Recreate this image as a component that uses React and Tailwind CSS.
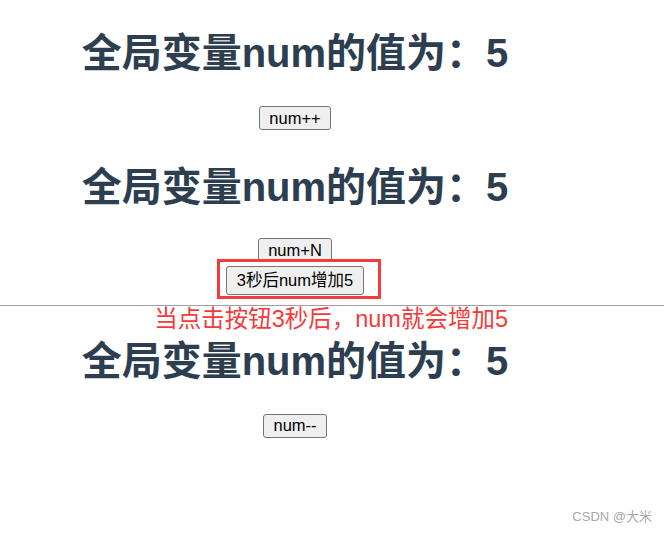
import React, { useState } from 'react';

const FONT = { fontFamily: '"Liberation Sans", "Noto Sans CJK SC", sans-serif' };

function NumButton({ children, onClick, tall }) {
  return (
    <button
      onClick={onClick}
      className={`${tall ? 'h-[29px] px-[10px]' : 'h-[24px] px-[9px]'} text-[16.5px] leading-none text-black bg-[#efefef] border border-[#767676] rounded-[3px] hover:bg-[#e5e5e5]`}
    >
      {children}
    </button>
  );
}

function Title() {
  return (
    <h1 className="h-[46px] leading-[46px] text-[40px] font-bold text-[#2c3e50] whitespace-nowrap">
      全局变量num的值为：5
    </h1>
  );
}

export default function App() {
  const [num, setNum] = useState(5);

  const addLater = () => {
    setTimeout(() => setNum((n) => n + 5), 3000);
  };

  return (
    <div className="relative min-h-[533px] w-[664px] bg-white overflow-hidden" style={FONT}>
      {/* top component */}
      <div className="w-[590px] flex flex-col items-center pt-[30px]">
        <Title />
        <div className="mt-[30px]">
          <NumButton onClick={() => setNum(num + 1)}>num++</NumButton>
        </div>
        <div className="mt-[33px]">
          <Title />
        </div>
        <div className="mt-[28px]">
          <NumButton onClick={() => setNum(num + 5)}>num+N</NumButton>
        </div>
        <div className="relative mt-[3px]">
          <NumButton tall onClick={addLater}>3秒后num增加5</NumButton>
          <span className="absolute -left-[9px] -right-[17px] -top-[7px] -bottom-[4px] border-[3px] border-[#f43a3a] pointer-events-none" />
        </div>
      </div>

      {/* divider + annotation */}
      <div className="relative mt-[10px]">
        <div className="h-px bg-[#a0a0a0]" />
        <p className="absolute right-[156px] top-[0px] text-[23.5px] leading-[28px] text-[#f43a3a] whitespace-nowrap">
          当点击按钮3秒后，num就会增加5
        </p>
      </div>

      {/* bottom component */}
      <div className="w-[590px] flex flex-col items-center pt-[32px]">
        <Title />
        <div className="mt-[30px]">
          <NumButton onClick={() => setNum(num - 1)}>num--</NumButton>
        </div>
      </div>

      <span className="absolute right-[12px] bottom-[7px] text-[13px] text-[#a8a8a8]">CSDN @大米</span>
    </div>
  );
}
